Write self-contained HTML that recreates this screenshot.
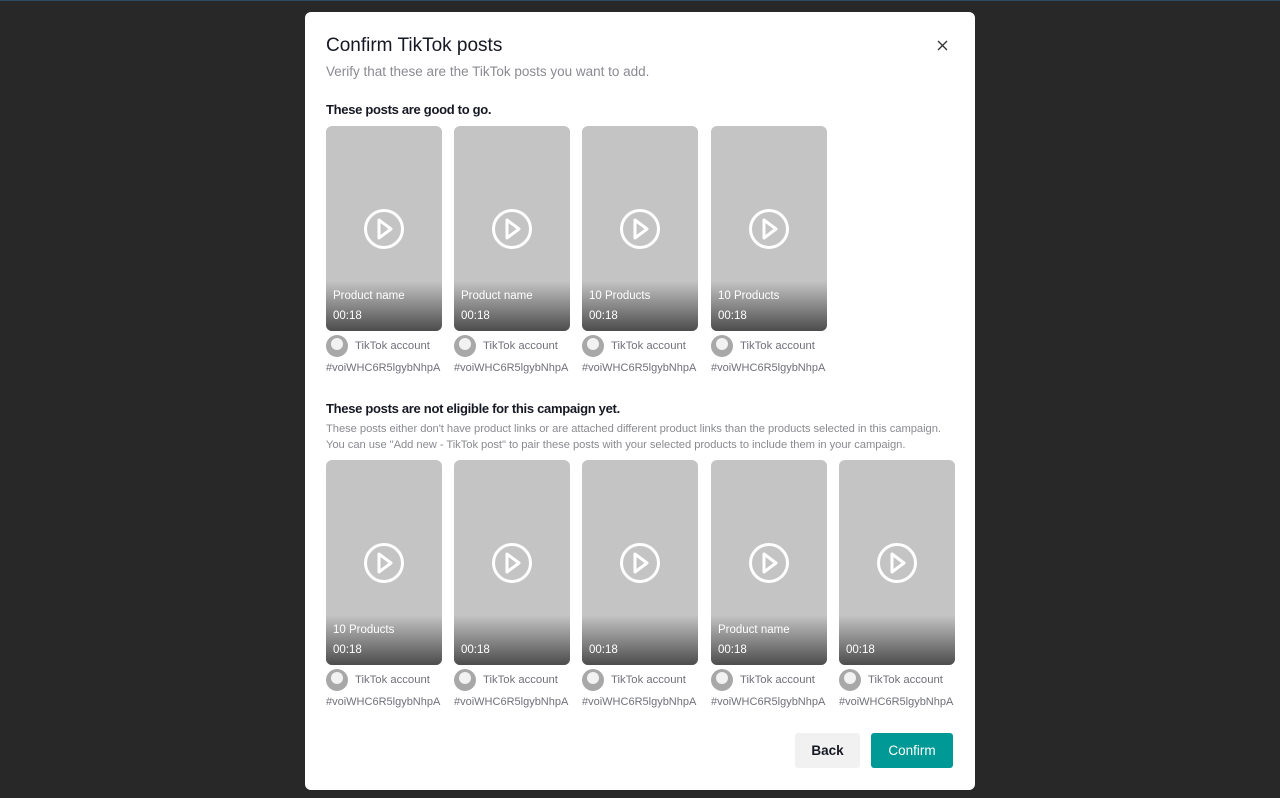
<!DOCTYPE html>
<html><head><style>
*{margin:0;padding:0;box-sizing:border-box}
body{width:1280px;height:798px;background:#282828;font-family:"Liberation Sans",sans-serif;position:relative;overflow:hidden}
.topline{position:absolute;left:0;top:0;width:1280px;height:1px;background:#2a4a66}
.modal{position:absolute;left:305px;top:12px;width:670px;height:778px;background:#fff;border-radius:6px}
.abs{position:absolute}
h1{position:absolute;left:21px;top:23px;font-size:19px;font-weight:normal;color:#161823;letter-spacing:0px}
.sub{left:21px;top:52px;font-size:13.5px;color:#8a8b91}
.sec{font-size:13px;font-weight:bold;color:#161823;left:21px;letter-spacing:-0.3px}
.desc{left:21px;font-size:11.2px;color:#8a8b91;line-height:16px;white-space:nowrap;letter-spacing:-0.05px}
.card{position:absolute;width:116px}
.thumb{width:116px;height:205px;border-radius:6px;background:#c4c4c4;position:relative;overflow:hidden}
.grad{position:absolute;left:0;bottom:0;width:116px;height:50px;background:linear-gradient(rgba(80,80,80,0),rgba(70,70,70,.95))}
.play{position:absolute;left:37px;top:82px}
.t1{position:absolute;left:7px;top:164px;color:#fff;font-size:11.5px}
.t2{position:absolute;left:7px;top:184px;color:#fff;font-size:11.5px}
.av{position:absolute;left:0;top:209px;width:22px;height:22px;border-radius:50%;background:#a8a8a8;overflow:hidden}
.av:after{content:"";position:absolute;left:5px;top:3px;width:12px;height:12px;border-radius:50%;background:#f2f2f2}
.acc{position:absolute;left:29px;top:214px;font-size:11.3px;color:#70717a;white-space:nowrap}
.hash{position:absolute;left:0;top:236px;font-size:11px;color:#70717a;white-space:nowrap}
.btn{position:absolute;top:721px;height:35px;border-radius:3px;font-size:13.5px;font-weight:bold;text-align:center;line-height:35px}
</style></head><body>
<div class="topline"></div>
<div class="modal">
<h1>Confirm TikTok posts</h1>
<div class="abs sub">Verify that these are the TikTok posts you want to add.</div>
<svg class="abs" style="left:632px;top:28px" width="11" height="11" viewBox="0 0 11 11"><path d="M1 1L10 10M10 1L1 10" stroke="#333" stroke-width="1.3"/></svg>
<div class="abs sec" style="top:90px">These posts are good to go.</div>

<div class="card" style="left:21px;top:114px"><div class="thumb"><svg class="play" width="42" height="42" viewBox="0 0 42 42"><circle cx="21" cy="21" r="18.5" fill="none" stroke="#fff" stroke-width="3"/><path d="M16 12L28 21L16 30Z" fill="none" stroke="#fff" stroke-width="3" stroke-linejoin="round"/></svg><div class="grad"></div><div class="t1">Product name</div><div class="t2">00:18</div></div><div class="av"></div><div class="acc">TikTok account</div><div class="hash">#voiWHC6R5lgybNhpA</div></div>
<div class="card" style="left:149px;top:114px"><div class="thumb"><svg class="play" width="42" height="42" viewBox="0 0 42 42"><circle cx="21" cy="21" r="18.5" fill="none" stroke="#fff" stroke-width="3"/><path d="M16 12L28 21L16 30Z" fill="none" stroke="#fff" stroke-width="3" stroke-linejoin="round"/></svg><div class="grad"></div><div class="t1">Product name</div><div class="t2">00:18</div></div><div class="av"></div><div class="acc">TikTok account</div><div class="hash">#voiWHC6R5lgybNhpA</div></div>
<div class="card" style="left:277px;top:114px"><div class="thumb"><svg class="play" width="42" height="42" viewBox="0 0 42 42"><circle cx="21" cy="21" r="18.5" fill="none" stroke="#fff" stroke-width="3"/><path d="M16 12L28 21L16 30Z" fill="none" stroke="#fff" stroke-width="3" stroke-linejoin="round"/></svg><div class="grad"></div><div class="t1">10 Products</div><div class="t2">00:18</div></div><div class="av"></div><div class="acc">TikTok account</div><div class="hash">#voiWHC6R5lgybNhpA</div></div>
<div class="card" style="left:406px;top:114px"><div class="thumb"><svg class="play" width="42" height="42" viewBox="0 0 42 42"><circle cx="21" cy="21" r="18.5" fill="none" stroke="#fff" stroke-width="3"/><path d="M16 12L28 21L16 30Z" fill="none" stroke="#fff" stroke-width="3" stroke-linejoin="round"/></svg><div class="grad"></div><div class="t1">10 Products</div><div class="t2">00:18</div></div><div class="av"></div><div class="acc">TikTok account</div><div class="hash">#voiWHC6R5lgybNhpA</div></div>

<div class="abs sec" style="top:389px">These posts are not eligible for this campaign yet.</div>
<div class="abs desc" style="top:409px">These posts either don't have product links or are attached different product links than the products selected in this campaign.<br>You can use "Add new - TikTok post" to pair these posts with your selected products to include them in your campaign.</div>

<div class="card" style="left:21px;top:448px"><div class="thumb"><svg class="play" width="42" height="42" viewBox="0 0 42 42"><circle cx="21" cy="21" r="18.5" fill="none" stroke="#fff" stroke-width="3"/><path d="M16 12L28 21L16 30Z" fill="none" stroke="#fff" stroke-width="3" stroke-linejoin="round"/></svg><div class="grad"></div><div class="t1">10 Products</div><div class="t2">00:18</div></div><div class="av"></div><div class="acc">TikTok account</div><div class="hash">#voiWHC6R5lgybNhpA</div></div>
<div class="card" style="left:149px;top:448px"><div class="thumb"><svg class="play" width="42" height="42" viewBox="0 0 42 42"><circle cx="21" cy="21" r="18.5" fill="none" stroke="#fff" stroke-width="3"/><path d="M16 12L28 21L16 30Z" fill="none" stroke="#fff" stroke-width="3" stroke-linejoin="round"/></svg><div class="grad"></div><div class="t2">00:18</div></div><div class="av"></div><div class="acc">TikTok account</div><div class="hash">#voiWHC6R5lgybNhpA</div></div>
<div class="card" style="left:277px;top:448px"><div class="thumb"><svg class="play" width="42" height="42" viewBox="0 0 42 42"><circle cx="21" cy="21" r="18.5" fill="none" stroke="#fff" stroke-width="3"/><path d="M16 12L28 21L16 30Z" fill="none" stroke="#fff" stroke-width="3" stroke-linejoin="round"/></svg><div class="grad"></div><div class="t2">00:18</div></div><div class="av"></div><div class="acc">TikTok account</div><div class="hash">#voiWHC6R5lgybNhpA</div></div>
<div class="card" style="left:406px;top:448px"><div class="thumb"><svg class="play" width="42" height="42" viewBox="0 0 42 42"><circle cx="21" cy="21" r="18.5" fill="none" stroke="#fff" stroke-width="3"/><path d="M16 12L28 21L16 30Z" fill="none" stroke="#fff" stroke-width="3" stroke-linejoin="round"/></svg><div class="grad"></div><div class="t1">Product name</div><div class="t2">00:18</div></div><div class="av"></div><div class="acc">TikTok account</div><div class="hash">#voiWHC6R5lgybNhpA</div></div>
<div class="card" style="left:534px;top:448px"><div class="thumb"><svg class="play" width="42" height="42" viewBox="0 0 42 42"><circle cx="21" cy="21" r="18.5" fill="none" stroke="#fff" stroke-width="3"/><path d="M16 12L28 21L16 30Z" fill="none" stroke="#fff" stroke-width="3" stroke-linejoin="round"/></svg><div class="grad"></div><div class="t2">00:18</div></div><div class="av"></div><div class="acc">TikTok account</div><div class="hash">#voiWHC6R5lgybNhpA</div></div>

<div class="btn" style="left:490px;width:65px;background:#f1f1f2;color:#161823">Back</div>
<div class="btn" style="left:566px;width:82px;background:#009995;color:#fff;font-weight:normal">Confirm</div>
</div>
</body></html>
